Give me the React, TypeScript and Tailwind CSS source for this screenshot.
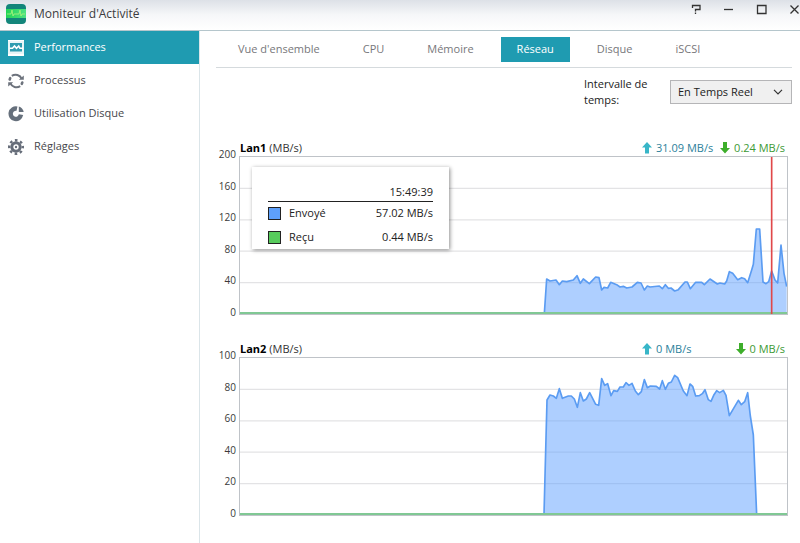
import React from "react";

type Point = [number, number];

const GRID_W = 1641;
const GRID_H = 471;

// Samples are in plot units: x runs 0..1641, y runs 0 (top) to 471 (bottom).
const LAN1: Point[] = [
  [913, 470], [920, 366], [930, 372], [948, 369], [958, 383], [967, 372], [980, 374], [1000, 369],
  [1011, 356], [1021, 379], [1030, 366], [1048, 380], [1067, 360], [1077, 362], [1085, 399],
  [1092, 391], [1103, 393], [1112, 376], [1130, 383], [1140, 390], [1150, 388], [1160, 393],
  [1176, 390], [1192, 376], [1203, 378], [1213, 399], [1222, 387], [1230, 390], [1258, 387],
  [1267, 395], [1276, 383], [1285, 394], [1293, 393], [1304, 402], [1315, 398], [1335, 375],
  [1342, 375], [1351, 395], [1367, 376], [1385, 376], [1393, 383], [1410, 366], [1432, 381],
  [1440, 378], [1454, 381], [1460, 372], [1468, 344], [1478, 349], [1493, 368], [1505, 362],
  [1514, 365], [1523, 377], [1535, 339], [1540, 322], [1549, 216], [1559, 216], [1569, 375],
  [1578, 380], [1586, 374], [1595, 342], [1605, 369], [1613, 378], [1623, 264], [1632, 349],
  [1640, 389],
];

const LAN2: Point[] = [
  [912, 470], [921, 126], [930, 111], [940, 114], [949, 121], [958, 92], [967, 121], [985, 114],
  [994, 114], [1003, 123], [1012, 148], [1021, 104], [1030, 129], [1039, 123], [1049, 104],
  [1067, 139], [1076, 142], [1085, 62], [1094, 82], [1103, 77], [1113, 113], [1121, 98],
  [1132, 100], [1140, 87], [1150, 87], [1158, 74], [1167, 82], [1176, 76], [1186, 99],
  [1195, 110], [1204, 101], [1213, 65], [1222, 89], [1231, 84], [1249, 85], [1259, 93],
  [1267, 68], [1276, 94], [1285, 76], [1294, 72], [1304, 52], [1313, 59], [1330, 99], [1341, 113],
  [1350, 78], [1358, 85], [1367, 114], [1378, 113], [1387, 107], [1395, 95], [1405, 125],
  [1413, 130], [1422, 110], [1430, 98], [1439, 104], [1450, 97], [1458, 112], [1468, 173],
  [1495, 127], [1504, 140], [1514, 131], [1523, 104], [1531, 174], [1540, 231], [1545, 351],
  [1550, 470],
];

function AppLogo() {
  return (
    <svg viewBox="0 0 20 20" className="h-5 w-5 shrink-0" aria-hidden="true">
      <defs>
        <linearGradient id="logo-band" x1="0" x2="1">
          <stop offset="0" stopColor="#22d455" />
          <stop offset="1" stopColor="#4fe283" />
        </linearGradient>
      </defs>
      <rect width="20" height="20" rx="4" fill="#12857a" />
      <rect y="5" width="20" height="9" fill="url(#logo-band)" />
      <path d="M1 10h4l1-4 1 6 1-2h5l1-4 1 6 1-2h3" fill="none" stroke="#a4f07c" strokeWidth="0.900" />
    </svg>
  );
}

function PerformanceIcon() {
  return (
    <svg viewBox="0 0 16 16" className="h-4 w-4 shrink-0" aria-hidden="true">
      <path d="M0 0h16v1.500H0zM0 13.500h16V16H0z" fill="#fff" />
      <rect y="1" width="16" height="13" fill="#e8f5f7" />
      <rect x="2" y="3" width="12" height="8.500" fill="#2f9cb0" />
      <path d="M1.500 8.300h3l2-2.300 2 2.300 2.200-2.300 1.300 2.300h3" fill="none" stroke="#fff" strokeWidth="1.600" />
    </svg>
  );
}

function ProcessIcon() {
  return (
    <svg viewBox="0 0 16 16" className="h-4 w-4 shrink-0" fill="none" stroke="#6d737d" aria-hidden="true">
      <path d="M3.800 2.900a6.600 6.600 0 0 1 9.900 2.900M12.200 13.100a6.600 6.600 0 0 1-9.900-2.900" strokeWidth="2" />
      <path d="M1.700 6.500l.5-1.300M14.300 9.500l-.5 1.300" strokeWidth="2.600" strokeLinecap="round" />
      <path d="M10.800 6.800h5V2.500zM5.200 9.200h-5v4.300z" fill="#6d737d" stroke="none" />
    </svg>
  );
}

function DiskUsageIcon() {
  return (
    <svg viewBox="0 0 16 16" className="h-4 w-4 shrink-0" aria-hidden="true">
      <path d="M9 2.700a5.200 5.200 0 1 0 4 6" fill="none" stroke="#66707c" strokeWidth="4.400" />
      <path d="M10.800 6V.6a7.500 7.500 0 0 1 4.900 5.400z" fill="#66707c" />
    </svg>
  );
}

function GearIcon() {
  return (
    <svg viewBox="0 0 16 16" className="h-4 w-4 shrink-0" aria-hidden="true">
      <circle cx="8" cy="8" r="6.800" fill="none" stroke="#666d79" strokeWidth="2.400" strokeDasharray="2.600 2.740" strokeDashoffset="1.300" />
      <circle cx="8" cy="8" r="4.200" fill="none" stroke="#666d79" strokeWidth="3" />
      <circle cx="8" cy="8" r="1.200" fill="#666d79" />
    </svg>
  );
}

const NAV = [
  { label: "Performances", icon: <PerformanceIcon />, active: true },
  { label: "Processus", icon: <ProcessIcon />, active: false },
  { label: "Utilisation Disque", icon: <DiskUsageIcon />, active: false },
  { label: "Réglages", icon: <GearIcon />, active: false },
];

const TABS = ["Vue d'ensemble", "CPU", "Mémoire", "Réseau", "Disque", "iSCSI"];

const CONTROLS = [
  { label: "Aide", path: "M2.500 4V1.500h7.500v4H5.500v2M5.500 8.500v1.500" },
  { label: "Réduire", path: "M1 5.500h9" },
  { label: "Agrandir", path: "M1.500 1.500h8.500v8H1.500z" },
  { label: "Fermer", path: "M1.500 1.500l8 8M9.500 1.500l-8 8" },
];

function TitleBar() {
  return (
    <header className="flex h-[31px] items-start justify-between border-b border-[#b5c6cc] bg-linear-to-b from-[#dde1e7] via-[#f6f7f9] via-50% to-white">
      <div className="flex items-center gap-2 pt-1 pl-1.5">
        <AppLogo />
        <h1 className="text-xs text-[#3c3c40]">Moniteur d'Activité</h1>
      </div>
      <div className="flex gap-[22px] pt-1">
        {CONTROLS.map((c) => (
          <button key={c.label} type="button" aria-label={c.label} className="h-[11px] w-[11px]">
            <svg viewBox="0 0 11 11" className="h-[11px] w-[11px]" fill="none" stroke="#333" strokeWidth="1.300">
              <path d={c.path} />
            </svg>
          </button>
        ))}
      </div>
    </header>
  );
}

function Arrow({ down, color }: { down?: boolean; color: string }) {
  return (
    <svg viewBox="0 0 10 12" className="h-3 w-2.5 shrink-0" fill={color} aria-hidden="true">
      <path d={down ? "M3 0h4v6h3l-5 5.500L0 6h3z" : "M3 11.500h4V5.500h3L5 0 0 5.500h3z"} />
    </svg>
  );
}

type ChartProps = {
  name: string;
  ticks: number[];
  data: Point[];
  sent: string;
  received: string;
  marker?: number;
  children?: React.ReactNode;
};

function NetworkChart({ name, ticks, data, sent, received, marker, children }: ChartProps) {
  const line = data.map((p) => p.join(",")).join(" ");
  return (
    <section className="flex">
      <div className="mt-[7px] flex h-[172px] w-[22px] shrink-0 flex-col justify-between pr-0.5 text-right text-[10px] leading-[14px] text-[#3a3a3a]">
        {ticks.map((t) => (
          <span key={t}>{t}</span>
        ))}
      </div>
      <div className="min-w-0 flex-1 pl-px">
        <div className="flex h-4 items-center justify-between pr-[3px] text-[11px] leading-4">
          <h2 className="pl-px text-[#333]">
            <b className="font-bold text-black">{name}</b> (MB/s)
          </h2>
          <div className="flex w-[143px] justify-between">
            <span className="flex items-center gap-1 text-[#2b7f9b]">
              <Arrow color="#38b6c8" />
              {sent}
            </span>
            <span className="flex items-center gap-1 text-[#3d9a35]">
              <Arrow down color="#3eae2b" />
              {received}
            </span>
          </div>
        </div>
        <div className="relative border border-[#bfc3c8]">
          <svg viewBox={`0 0 ${GRID_W} ${GRID_H}`} preserveAspectRatio="none" className="block h-[157px] w-full" role="img" aria-label={name}>
            {[1, 2, 3, 4].map((i) => (
              <line key={i} x1="0" x2={GRID_W} y1={(i * GRID_H) / 5} y2={(i * GRID_H) / 5} stroke="#e3e3e5" strokeWidth="4" />
            ))}
            <polygon points={`${line} ${data[data.length - 1][0]},471 ${data[0][0]},471`} fill="#5ea0ff" fillOpacity="0.5" />
            <polyline points={line} fill="none" stroke="#5b9cf2" strokeWidth="5" strokeLinejoin="round" />
            <rect x="0" y="465" width={GRID_W} height="6" fill="#80c894" />
            {marker !== undefined && <line x1={marker} x2={marker} y1="0" y2={GRID_H} stroke="#e0484a" strokeWidth="5" />}
          </svg>
          {children}
        </div>
      </div>
    </section>
  );
}

function Tooltip() {
  const rows = [
    { label: "Envoyé", value: "57.02 MB/s", swatch: "bg-[#5ea0fb]" },
    { label: "Reçu", value: "0.44 MB/s", swatch: "bg-[#57cb5c]" },
  ];
  return (
    <div className="absolute top-2.5 left-3 w-[197px] bg-white px-4 pt-4 text-[11px] text-[#222] shadow-[1px_1px_4px_rgba(0,0,0,0.45)]">
      <table className="w-full border-collapse">
        <thead>
          <tr className="h-[18px] border-b border-[#222]">
            <th colSpan={2} className="p-0 text-right leading-4 font-normal">15:49:39</th>
          </tr>
        </thead>
        <tbody>
          {rows.map((r) => (
            <tr key={r.label} className="h-6">
              <th className="p-0 text-left font-normal">
                <span className="flex items-center gap-2">
                  <i className={`h-[13px] w-[13px] border border-[#222] ${r.swatch}`} />
                  {r.label}
                </span>
              </th>
              <td className="p-0 text-right">{r.value}</td>
            </tr>
          ))}
        </tbody>
      </table>
    </div>
  );
}

export default function App() {
  return (
    <div className="flex min-h-screen flex-col overflow-hidden bg-white font-['Open_Sans','Noto_Sans',sans-serif]">
      <TitleBar />
      <div className="flex flex-1">
        <nav className="w-[200px] shrink-0 border-r border-[#dbe5e9]">
          {NAV.map((n) => (
            <button
              key={n.label}
              type="button"
              className={`flex h-[33px] w-full items-center gap-[10px] pl-2 text-left text-[11px] ${
                n.active ? "bg-[#1f9bb1] text-white" : "text-[#47474b]"
              }`}
            >
              {n.icon}
              {n.label}
            </button>
          ))}
        </nav>
        <main className="min-w-0 flex-1 pr-2 pl-4">
          <div role="tablist" className="flex h-[37px] items-center gap-[11px] border-b border-[#d5dadd] pl-1.5">
            {TABS.map((t) => (
              <button
                key={t}
                type="button"
                role="tab"
                aria-selected={t === "Réseau"}
                className={`h-[25px] px-4 text-[11px] whitespace-nowrap ${t === "Réseau" ? "bg-[#1f9bb1] text-white" : "text-[#77777b]"}`}
              >
                {t}
              </button>
            ))}
          </div>
          <div className="flex items-center justify-end pt-2 text-[11px] text-[#222]">
            <label htmlFor="interval" className="w-[86px] pr-3 leading-4">
              Intervalle de temps:
            </label>
            <div className="relative w-[122px]">
              <select id="interval" className="block h-6 w-full appearance-none border border-[#b5b5b7] bg-[#f0f0f0] pl-[7px] text-[11px] text-[#222]">
                <option>En Temps Reel</option>
              </select>
              <svg viewBox="0 0 10 6" className="pointer-events-none absolute top-[9px] right-[9px] h-1.5 w-2.5" fill="none" stroke="#333" strokeWidth="1.200">
                <path d="M1 .8l4 4 4-4" />
              </svg>
            </div>
          </div>
          <div className="flex flex-col gap-[22px] pt-8 pr-1">
            <NetworkChart name="Lan1" ticks={[200, 160, 120, 80, 40, 0]} data={LAN1} sent="31.09 MB/s" received="0.24 MB/s" marker={1595}>
              <Tooltip />
            </NetworkChart>
            <NetworkChart name="Lan2" ticks={[100, 80, 60, 40, 20, 0]} data={LAN2} sent="0 MB/s" received="0 MB/s" />
          </div>
        </main>
      </div>
    </div>
  );
}
